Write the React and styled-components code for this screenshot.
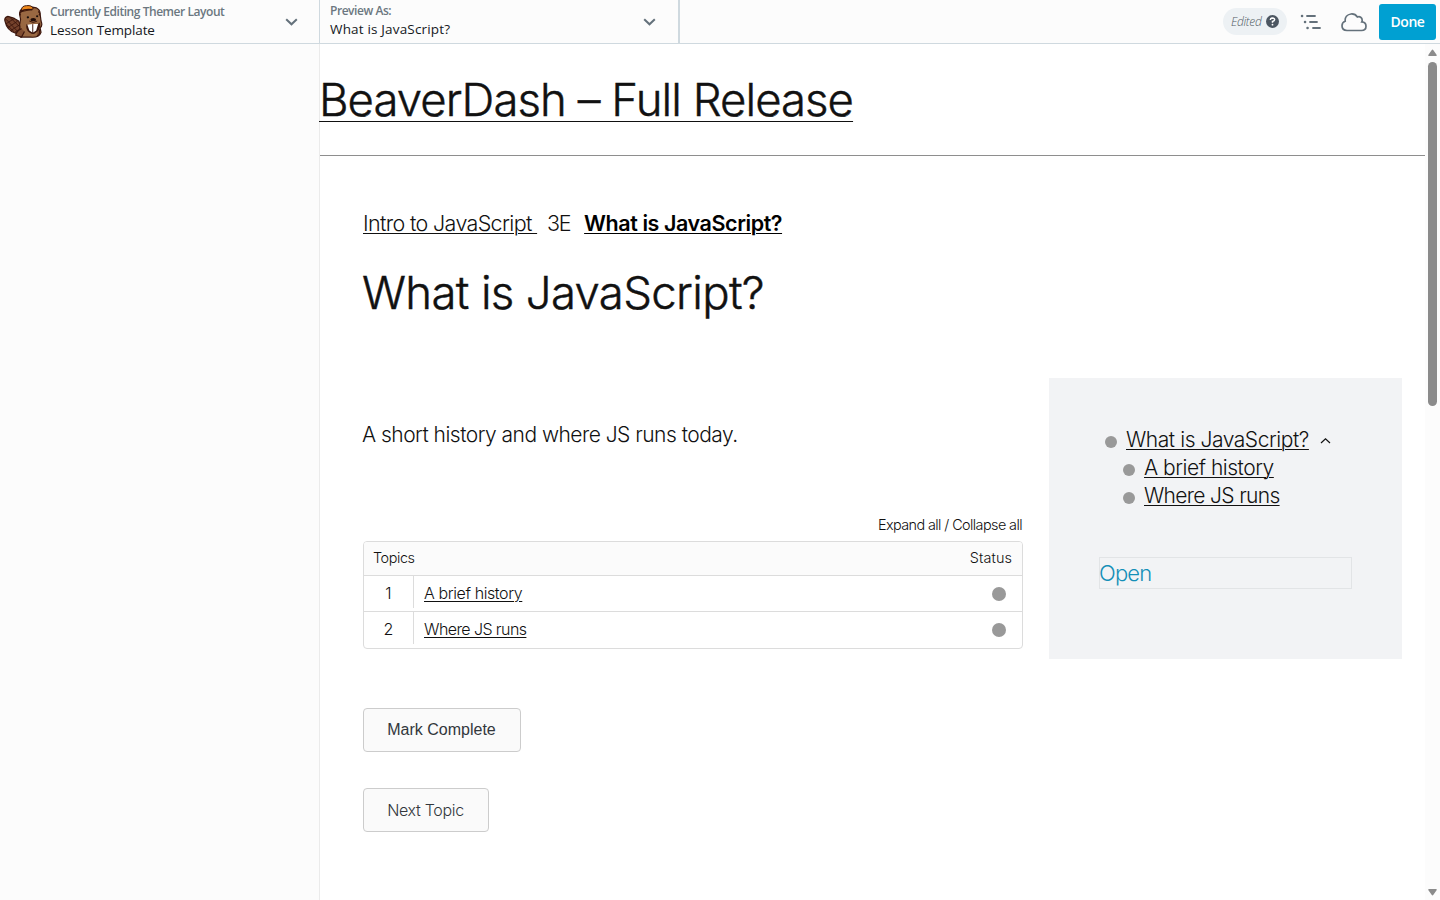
import React from 'react';
import styled, { createGlobalStyle } from 'styled-components';

const GlobalStyle = createGlobalStyle`
  * {
    box-sizing: border-box;
  }

  body {
    margin: 0;
    background: #fff;
    color: #111;
    font-family: Inter, "Liberation Sans", sans-serif;
    font-weight: 300;
    overflow: hidden;
  }
`;

const Page = styled.div`
  display: flex;
  flex-direction: column;
  height: 900px;
  width: 1440px;
`;

const TopBar = styled.header`
  display: flex;
  height: 44px;
  background: #fcfcfc;
  border-bottom: 1px solid #cfd9df;
  font-family: "Open Sans", "Noto Sans", sans-serif;
  font-weight: 400;
`;

const BarSection = styled.div`
  display: flex;
  align-items: center;
  gap: 7px;
  width: ${({ $width }) => $width}px;
  padding-left: ${({ $left }) => $left}px;
  padding-right: ${({ $right }) => $right}px;
  border-right: ${({ $line }) => $line}px solid #cfd9df;
`;

const BarTitles = styled.div`
  flex: 1;
  height: 43px;
  padding-top: ${({ $top }) => $top}px;
`;

const BarLabel = styled.div`
  font-size: 12px;
  font-weight: 600;
  line-height: 16px;
  color: #6b7780;
  white-space: nowrap;
  letter-spacing: ${({ $spacing }) => $spacing}px;
`;

const BarValue = styled.div`
  font-size: 13.5px;
  line-height: 20px;
  color: #15191c;
  white-space: nowrap;
  letter-spacing: ${({ $spacing }) => $spacing}px;
`;

const BarActions = styled.div`
  display: flex;
  align-items: center;
  margin-left: auto;
  padding-right: 4px;
`;

const EditedPill = styled.div`
  display: flex;
  align-items: center;
  justify-content: space-between;
  width: 64px;
  height: 27px;
  padding: 0 8px;
  margin-right: 13px;
  border-radius: 14px;
  background: #edf1f4;
  color: #525c65;
  font-size: 12px;
  font-style: italic;
  font-weight: 300;
  letter-spacing: -0.35px;
`;

const DoneBtn = styled.button`
  width: 57px;
  height: 36px;
  margin-left: 12px;
  padding: 0;
  border: none;
  border-radius: 3px;
  background: #00a0d2;
  color: #fff;
  font-family: "Open Sans", sans-serif;
  font-size: 14px;
  font-weight: 600;
  letter-spacing: -0.45px;
`;

const Workspace = styled.div`
  display: flex;
  flex: 1;
`;

const SidePanel = styled.aside`
  width: 320px;
  background: #fcfcfc;
  border-right: 1px solid #ebebeb;
`;

const Preview = styled.main`
  flex: 1;
`;

const SiteHeader = styled.div`
  height: 112px;
  padding-top: 28px;
  border-bottom: 1px solid #8e8e8e;
`;

const Link = styled.a`
  color: ${({ $color }) => $color || '#111'};
  font-weight: ${({ $weight }) => $weight || 'inherit'};
  letter-spacing: ${({ $spacing }) => $spacing || 0}px;
  text-decoration: underline;
  text-decoration-thickness: 1px;
  text-underline-offset: ${({ $offset }) => $offset || 2}px;
  white-space: pre;
`;

const Heading = styled.h1`
  margin: 0;
  font-size: 45.5px;
  font-weight: 300;
  line-height: 56px;
  letter-spacing: ${({ $spacing }) => $spacing}px;
  text-indent: -1px;
  white-space: nowrap;
  -webkit-text-stroke: 0.45px #111;
`;

const Content = styled.div`
  padding: 53px 23px 0 43px;
`;

const Breadcrumb = styled.nav`
  display: flex;
  height: 28px;
  margin-bottom: 28px;
  font-size: 21.5px;
  line-height: 28px;
`;

const Separator = styled.span`
  width: 37px;
  margin-left: 10px;
  letter-spacing: -1.3px;
`;

const Columns = styled.div`
  display: flex;
  justify-content: space-between;
  margin-top: 57px;
`;

const LessonColumn = styled.div`
  width: 660px;
  padding-top: 43px;
`;

const Intro = styled.p`
  margin: 0;
  font-size: 21px;
  line-height: 28px;
  letter-spacing: -0.52px;
  text-indent: -1px;
`;

const ExpandRow = styled.div`
  height: 20px;
  margin: 66px 0 6px;
  padding-right: 1px;
  font-size: 14.4px;
  line-height: 20px;
  letter-spacing: -0.58px;
  text-align: right;
`;

const TopicTable = styled.div`
  height: 108px;
  border: 1px solid #dcdcdc;
  border-radius: 4px;
  overflow: hidden;
`;

const TableHead = styled.div`
  display: flex;
  justify-content: space-between;
  height: 33px;
  padding: 0 10px 0 9px;
  background: #fbfbfb;
  font-size: 14.4px;
  line-height: 32px;
`;

const HeadCell = styled.span`
  letter-spacing: ${({ $spacing }) => $spacing}px;
`;

const TopicRow = styled.div`
  display: flex;
  height: 36px;
  border-top: 1px solid #dcdcdc;
  font-size: 16px;
  line-height: 35px;
`;

const TopicNumber = styled.div`
  width: 50px;
  height: 32px;
  border-right: 1px solid #dcdcdc;
  text-align: center;
`;

const TopicName = styled.div`
  flex: 1;
  padding-left: 10px;
`;

const StatusDot = styled.span`
  flex: none;
  width: ${({ $size }) => $size}px;
  height: ${({ $size }) => $size}px;
  border-radius: 50%;
  background: #999;
`;

const TopicStatus = styled.div`
  display: flex;
  align-items: center;
  padding: 1px 16px 0 0;
`;

const StepBtn = styled.button`
  display: block;
  width: ${({ $width }) => $width}px;
  height: 44px;
  margin-top: ${({ $top }) => $top}px;
  padding: 0 1px 0 0;
  border: 1px solid #ccc;
  border-radius: 4px;
  background: #fafafa;
  color: #32373c;
  font-family: ${({ $font }) => $font};
  font-size: 16px;
  font-weight: ${({ $weight }) => $weight};
  letter-spacing: ${({ $spacing }) => $spacing}px;
`;

const LessonNav = styled.aside`
  width: 353px;
  height: 281px;
  padding: 48px 50px 0;
  background: #f2f3f5;
`;

const NavItem = styled.div`
  display: flex;
  align-items: center;
  gap: 9px;
  height: 28px;
  padding-left: ${({ $indent }) => $indent}px;
  font-size: 21px;
  line-height: 28px;

  ${StatusDot} {
    margin-top: 3px;
  }
`;

const OpenBox = styled.div`
  height: 32px;
  margin-top: 47px;
  border: 1px solid #e2e4e6;
  color: #148fb8;
  font-size: 22px;
  line-height: 31px;
  letter-spacing: -0.8px;
  text-indent: -1px;
`;

const ScrollTrack = styled.div`
  display: flex;
  flex-direction: column;
  align-items: center;
  width: 15px;
  padding: 5px 0 4px;
  background: #fcfcfc;
`;

const ScrollThumb = styled.div`
  width: 9px;
  height: 344px;
  margin: 5px 0 auto;
  border-radius: 5px;
  background: #8b8b8b;
`;

function BeaverLogo() {
  return (
    <svg width="39" height="34" viewBox="0 0 40 36" preserveAspectRatio="none">
      <path d="M1 17Q0 13 4 12Q10 13 15 17L18 25L12 30Q3 27 1 17Z" fill="#74412b" stroke="#3b160d" strokeWidth="1.2" />
      <path d="M2 15l12 13M6 13l10 10M2 20l8 8M11 14l-9 6M14 17L4 24M16 21L7 27M17 25l-6 4" stroke="#3b160d" strokeWidth="0.9" />
      <path d="M16 10Q16 5 19 4Q22 2 28 2L33 3Q37 5 37 9L38 17Q40 22 37 24L38 29Q36 35 27 34L17 34Q14 33 15 29Q17 25 16 21L17 15Z" fill="#996842" stroke="#3b160d" strokeWidth="1.2" />
      <path d="M18 25Q13 27 12 32L18 34L21 28M34 24Q38 26 36 31L34 33" fill="#804d31" stroke="#3b160d" strokeWidth="1.2" />
      <path d="M18 5Q18 1 23 .7Q29 0 30 4L27 5L18 7Z" fill="#f08b1d" stroke="#3b160d" />
      <path d="M17 7Q21 4 29 5" fill="none" stroke="#3b160d" strokeWidth="1.4" />
      <path d="M23 20Q25 23 30 20Q36 21 37 18Q38 26 32 30Q30 32 26 29Q22 26 23 20Z" fill="#3b160d" />
      <path d="M24 21L29 20L29 29L26 27ZM30 20L35 20L33 27L30 29Z" fill="#fff" />
      <path d="M26 17Q30 20 34 17" fill="none" stroke="#3b160d" strokeWidth="1" />
      <ellipse cx="30" cy="15.5" rx="2.9" ry="1.8" fill="#1f0b08" />
      <circle cx="24.5" cy="13" r="1.2" fill="#170c09" />
      <circle cx="34" cy="12" r="1.1" fill="#170c09" />
      <path d="M17 11Q15 8 18 7M35 7Q38 8 36 11" fill="none" stroke="#3b160d" strokeWidth="1.3" />
    </svg>
  );
}

function BarChevron() {
  return (
    <svg width="13" height="8" viewBox="0 0 13 8" fill="none">
      <path d="M1.2 1.2L6.5 6.3L11.8 1.2" stroke="#64717b" strokeWidth="2" />
    </svg>
  );
}

function HelpIcon() {
  return (
    <svg width="13" height="13" viewBox="0 0 13 13" fill="none">
      <circle cx="6.5" cy="6.5" r="6.5" fill="#4c5661" />
      <path d="M4.3 5Q4.4 3 6.5 3Q8.7 3.1 8.6 4.8Q8.5 6 6.5 6.4V7.7" stroke="#fff" strokeWidth="1.5" />
      <circle cx="6.5" cy="9.7" r="0.9" fill="#fff" />
    </svg>
  );
}

function OutlineIcon() {
  return (
    <svg width="22" height="16" viewBox="0 0 22 16" stroke="#64717b" strokeWidth="1.8" strokeLinecap="round">
      <path d="M7 2H15M10 8H17M13 14H20" />
      <path d="M2 2h.1M5 8h.1M7.5 14h.1" strokeWidth="2.5" />
    </svg>
  );
}

const CloudDrawing = styled.svg`
  margin: 2px 0 0 19px;
`;

function CloudIcon() {
  return (
    <CloudDrawing width="26" height="19" viewBox="0 0 26 19" fill="none">
      <path d="M6 17.5C2.8 17.5 1 15.6 1 12.8C1 10.4 2.2 8.8 4.2 8.2C3.8 4.5 6.1 1.5 10 1C13 .7 15.1 2 16.4 4C18.8 3 21.2 4.4 21.2 7.2C21.2 8 21 8.5 20.8 8.9C23.4 9 25 10.8 25 13.2C25 15.8 23.3 17.5 20.5 17.5Z" stroke="#64717b" strokeWidth="1.7" />
    </CloudDrawing>
  );
}

function ScrollArrow({ down }) {
  return (
    <svg width="9" height="8" viewBox="0 0 9 8">
      <path d={down ? 'M.5 1H8.5Q9 2 8.4 2.6L5.4 6.8Q4.5 8 3.6 6.8L.6 2.6Q0 2 .5 1Z' : 'M.5 7H8.5Q9 6 8.4 5.4L5.4 1.2Q4.5 0 3.6 1.2L.6 5.4Q0 6 .5 7Z'} fill="#8b8b8b" />
    </svg>
  );
}

const topics = [
  { name: 'A brief history', spacing: -0.4, navSpacing: -0.47 },
  { name: 'Where JS runs', spacing: -0.58, navSpacing: -0.67 },
];

function App() {
  return (
    <Page>
      <GlobalStyle />
      <TopBar>
        <BarSection $width={320} $left={4} $right={21} $line={1}>
          <BeaverLogo />
          <BarTitles $top={4}>
            <BarLabel $spacing={-0.45}>Currently Editing Themer Layout</BarLabel>
            <BarValue $spacing={-0.11}>Lesson Template</BarValue>
          </BarTitles>
          <BarChevron />
        </BarSection>
        <BarSection $width={360} $left={10} $right={22} $line={2}>
          <BarTitles $top={3}>
            <BarLabel $spacing={-0.45}>Preview As:</BarLabel>
            <BarValue $spacing={0.17}>What is JavaScript?</BarValue>
          </BarTitles>
          <BarChevron />
        </BarSection>
        <BarActions>
          <EditedPill>
            Edited
            <HelpIcon />
          </EditedPill>
          <OutlineIcon />
          <CloudIcon />
          <DoneBtn>Done</DoneBtn>
        </BarActions>
      </TopBar>
      <Workspace>
        <SidePanel />
        <Preview>
          <SiteHeader>
            <Heading $spacing={-0.94}>
              <Link href="#" $offset={5} $spacing={-0.94}>BeaverDash – Full Release</Link>
            </Heading>
          </SiteHeader>
          <Content>
            <Breadcrumb>
              <Link href="#" $spacing={-0.65}>{'Intro to JavaScript '}</Link>
              <Separator>3E</Separator>
              <Link href="#" $weight={600} $color="#000" $spacing={-0.43}>What is JavaScript?</Link>
            </Breadcrumb>
            <Heading $spacing={-0.65}>What is JavaScript?</Heading>
            <Columns>
              <LessonColumn>
                <Intro>A short history and where JS runs today.</Intro>
                <ExpandRow>Expand all / Collapse all</ExpandRow>
                <TopicTable>
                  <TableHead>
                    <HeadCell $spacing={-0.4}>Topics</HeadCell>
                    <HeadCell $spacing={0.1}>Status</HeadCell>
                  </TableHead>
                  {topics.map((topic, index) => (
                    <TopicRow key={topic.name}>
                      <TopicNumber>{index + 1}</TopicNumber>
                      <TopicName>
                        <Link href="#" $spacing={topic.spacing}>{topic.name}</Link>
                      </TopicName>
                      <TopicStatus>
                        <StatusDot $size={14} />
                      </TopicStatus>
                    </TopicRow>
                  ))}
                </TopicTable>
                <StepBtn $width={158} $top={59} $font='"Liberation Sans", sans-serif' $weight={400} $spacing={0}>
                  Mark Complete
                </StepBtn>
                <StepBtn $width={126} $top={36} $font="Inter, sans-serif" $weight={300} $spacing={-0.32}>
                  Next Topic
                </StepBtn>
              </LessonColumn>
              <LessonNav>
                <NavItem $indent={6}>
                  <StatusDot $size={12} />
                  <Link href="#" $spacing={-0.44}>What is JavaScript?</Link>
                  <svg width="14" height="8" viewBox="0 0 14 8" fill="none">
                    <path d="M3 7L7.5 2.8L12 7" stroke="#111" strokeWidth="1.2" />
                  </svg>
                </NavItem>
                {topics.map((topic) => (
                  <NavItem key={topic.name} $indent={24}>
                    <StatusDot $size={12} />
                    <Link href="#" $spacing={topic.navSpacing}>{topic.name}</Link>
                  </NavItem>
                ))}
                <OpenBox>Open</OpenBox>
              </LessonNav>
            </Columns>
          </Content>
        </Preview>
        <ScrollTrack>
          <ScrollArrow />
          <ScrollThumb />
          <ScrollArrow down />
        </ScrollTrack>
      </Workspace>
    </Page>
  );
}

export default App;
